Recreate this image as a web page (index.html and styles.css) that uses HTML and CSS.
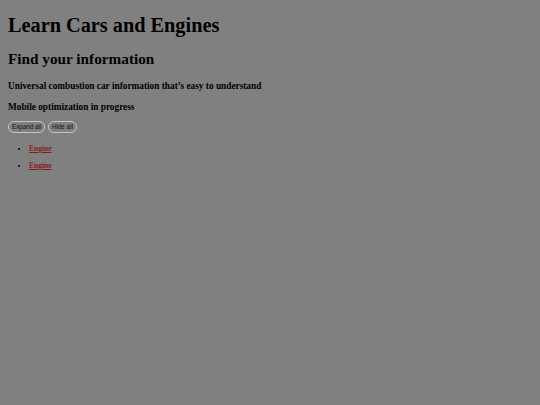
FILE: index.html
```html
<!DOCTYPE html>
<html lang="en">
<head>
<meta charset="utf-8">
<title>Learn Cars and Engines</title>
<link rel="stylesheet" href="styles.css">
</head>
<body class="page">
<h1 class="title">Learn Cars and Engines</h1>
<h2 class="subtitle">Find your information</h2>
<h4 class="note">Universal combustion car information that’s easy to understand</h4>
<h4 class="note">Mobile optimization in progress</h4>
<div class="controls">
  <button class="btn">Expand all</button>
  <button class="btn">Hide all</button>
</div>
<ul class="topics">
  <li class="topic"><a class="topic-link" href="#">Engine</a></li>
  <li class="topic"><a class="topic-link" href="#">Engine</a></li>
</ul>
</body>
</html>
```

FILE: styles.css
```css
html, body {
  background: #808080;
}
.page {
  margin: 0 8px;
  font-family: "Liberation Serif", "Times New Roman", serif;
  color: #000;
}
.title {
  font-size: 20.3px;
  margin: 14px 0 13px;
  font-weight: bold;
}
.subtitle {
  font-size: 15.25px;
  margin: 12.7px 0;
  font-weight: bold;
}
.note {
  font-size: 9.3px;
  margin: 11.3px 0 9.3px;
  font-weight: bold;
}
.controls {
  display: flex;
  gap: 2.5px;
}
.btn {
  font-family: "Liberation Sans", Arial, sans-serif;
  font-size: 6.3px;
  color: #111;
  background: transparent;
  border: 1px solid #c4c4c4;
  border-radius: 7px;
  padding: 1px 3px;
  line-height: 8px;
}
.topics {
  margin: 9.5px 0 0;
  padding-left: 21px;
  font-size: 7.5px;
}
.topic {
  margin: 0 0 6px;
  line-height: 11px;
}
.topic-link {
  color: #861c1c;
  font-weight: bold;
}
```
